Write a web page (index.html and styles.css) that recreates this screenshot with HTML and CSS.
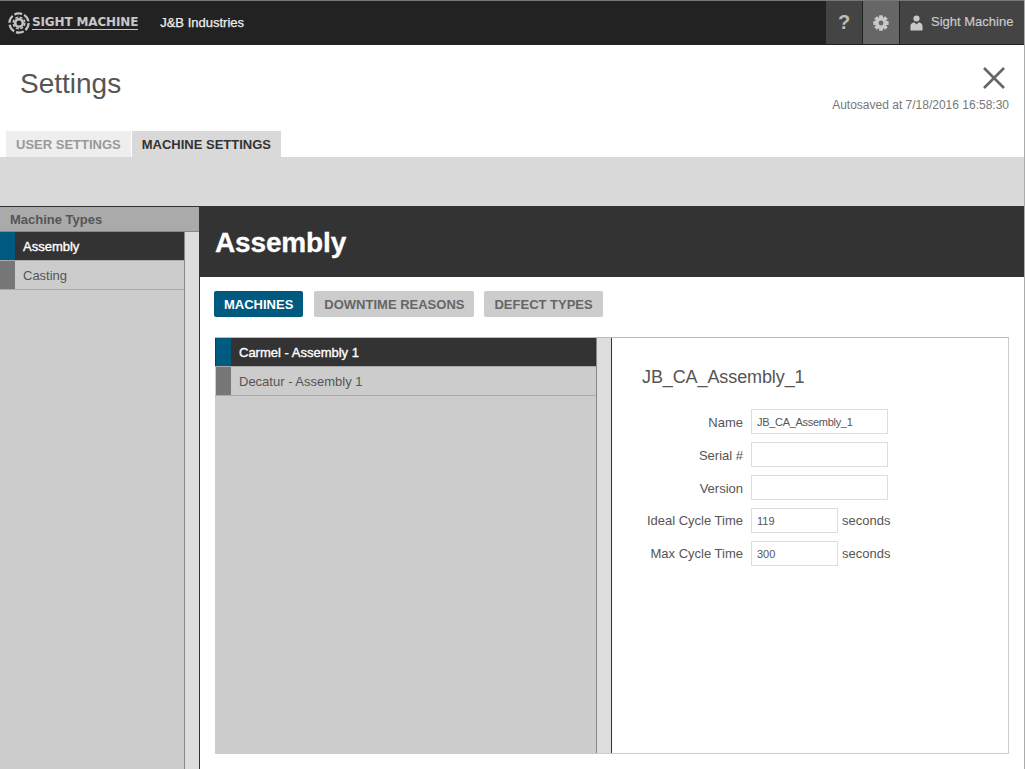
FILE: index.html
```html
<!DOCTYPE html>
<html lang="en">
  <head>
    <meta charset="UTF-8" />
    <title>Settings</title>
    <link rel="stylesheet" href="styles.css">
  </head>
  <body>
    <div class="topbar">
      <div class="brand">
        <svg class="brand-icon" width="24" height="24" viewBox="0 0 24 24">
          <g fill="none" stroke="#c4c4c4">
            <circle cx="12" cy="12" r="9.6" stroke-width="2.2" stroke-dasharray="8 2.05" />
            <circle cx="12" cy="12" r="3.8" stroke-width="2.6" />
            <circle cx="12" cy="12" r="5.8" stroke-width="1.6" stroke-dasharray="3 1.55" />
          </g>
        </svg>
        <span class="brand-name">SIGHT MACHINE</span>
      </div>
      <div class="company">J&amp;B Industries</div>
      <div class="top-actions">
        <div class="top-btn help">?</div>
        <div class="top-btn gear">
          <svg width="16" height="16" viewBox="0 0 18 18">
            <g fill="#c8c8c8">
              <rect x="6.8" y="0.4" width="4.4" height="17.2" rx="0.6" />
              <rect x="6.8" y="0.4" width="4.4" height="17.2" rx="0.6" transform="rotate(45 9 9)" />
              <rect x="6.8" y="0.4" width="4.4" height="17.2" rx="0.6" transform="rotate(90 9 9)" />
              <rect x="6.8" y="0.4" width="4.4" height="17.2" rx="0.6" transform="rotate(135 9 9)" />
              <circle cx="9" cy="9" r="6.4" />
            </g>
            <circle cx="9" cy="9" r="2.7" fill="#666" />
          </svg>
        </div>
        <div class="top-btn user">
          <svg width="13" height="16" viewBox="0 0 14 17">
            <circle cx="7" cy="3.6" r="3.3" fill="#c8c8c8" />
            <path d="M0.5 16.5V11.5C0.5 9.3 2.5 8 4.6 7.6L7 10L9.4 7.6C11.5 8 13.5 9.3 13.5 11.5V16.5Z" fill="#c8c8c8" />
          </svg>
          <span>Sight Machine</span>
        </div>
      </div>
    </div>

    <div class="page-head">
      <div class="title-row">
        <h1>Settings</h1>
        <div class="save-box">
          <svg class="close-icon" width="24" height="24" viewBox="0 0 24 24">
            <path d="M2 2L22 22M22 2L2 22" stroke="#666" stroke-width="2.6" fill="none" />
          </svg>
          <div class="autosaved">Autosaved at 7/18/2016 16:58:30</div>
        </div>
      </div>
      <div class="tabs">
        <div class="tab">USER SETTINGS</div>
        <div class="tab active">MACHINE SETTINGS</div>
      </div>
    </div>

    <div class="band"></div>

    <div class="workspace">
      <div class="sidebar">
        <div class="sidebar-title">Machine Types</div>
        <div class="scroll-wrap">
          <div class="item-list">
            <div class="item selected"><i></i>Assembly</div>
            <div class="item"><i></i>Casting</div>
          </div>
          <div class="scrollbar"></div>
        </div>
      </div>

      <div class="main">
        <div class="main-title">Assembly</div>
        <div class="main-body">
          <div class="pills">
            <div class="pill active">MACHINES</div>
            <div class="pill">DOWNTIME REASONS</div>
            <div class="pill">DEFECT TYPES</div>
          </div>
          <div class="panel">
            <div class="item-list">
              <div class="item selected"><i></i>Carmel - Assembly 1</div>
              <div class="item"><i></i>Decatur - Assembly 1</div>
            </div>
            <div class="scrollbar"></div>
            <div class="detail">
              <h2>JB_CA_Assembly_1</h2>
              <div class="field"><label>Name</label><input type="text" value="JB_CA_Assembly_1" /></div>
              <div class="field"><label>Serial #</label><input type="text" /></div>
              <div class="field"><label>Version</label><input type="text" /></div>
              <div class="field timed"><label>Ideal Cycle Time</label><input class="short" type="text" value="119" /><span>seconds</span></div>
              <div class="field timed"><label>Max Cycle Time</label><input class="short" type="text" value="300" /><span>seconds</span></div>
            </div>
          </div>
        </div>
      </div>
    </div>
  </body>
</html>
```

FILE: styles.css
```css
* {
  box-sizing: border-box;
}

html,
body {
  margin: 0;
  height: 769px;
  overflow: hidden;
}

body {
  display: flex;
  flex-direction: column;
  background: #fff;
  color: #555;
  font-family: "Liberation Sans", Arial, sans-serif;
  font-size: 14px;
  border-right: 1px solid #aaa;
}

/* top bar */
.topbar {
  display: flex;
  align-items: center;
  height: 45px;
  flex: none;
  background: #222;
  border-top: 1px solid #777;
  margin-right: -1px;
}

.brand {
  display: flex;
  align-items: center;
  margin-left: 7px;
}

.brand-name {
  margin-left: 1px;
  color: #c8c8c8;
  font-family: "DejaVu Sans", sans-serif;
  font-size: 12px;
  font-weight: bold;
  letter-spacing: -0.15px;
  line-height: 13px;
  border-bottom: 1px solid #c8c8c8;
}

.company {
  margin-left: 22px;
  margin-bottom: 2px;
  color: #eee;
  font-size: 13px;
  -webkit-text-stroke: 0.25px #eee;
}

.top-actions {
  display: flex;
  height: 100%;
  margin-left: auto;
}

.top-btn {
  display: flex;
  align-items: center;
  justify-content: center;
  height: 43px;
  margin-left: 1px;
  background: #444;
  color: #ccc;
}

.help {
  width: 36px;
  font-size: 20px;
  font-weight: bold;
  color: #bbb;
}

.gear {
  width: 36px;
  background: #666;
}

.user {
  width: 125px;
  justify-content: flex-start;
  gap: 8px;
  padding-left: 10px;
  font-size: 13px;
}

.user span {
  margin-bottom: 2px;
  -webkit-text-stroke: 0.15px #ccc;
}

/* white heading area */
.page-head {
  flex: none;
  height: 112px;
  display: flex;
  flex-direction: column;
  justify-content: space-between;
}

.title-row {
  display: flex;
  justify-content: space-between;
  padding: 23px 15px 0 20px;
}

h1 {
  margin: 0;
  font-size: 28px;
  font-weight: normal;
  line-height: 32px;
  color: #555;
}

.save-box {
  display: flex;
  flex-direction: column;
  align-items: flex-end;
}

.close-icon {
  margin: -2px 3px 0 0;
}

.autosaved {
  margin-top: 8px;
  font-size: 12px;
  color: #777;
}

.tabs {
  display: flex;
  gap: 1px;
  padding-left: 6px;
}

.tab {
  height: 26px;
  padding: 0 10px;
  background: #eee;
  color: #999;
  font-size: 13px;
  font-weight: bold;
  line-height: 27px;
}

.tab.active {
  background: #d9d9d9;
  color: #333;
}

.band {
  flex: none;
  height: 49px;
  background: #d9d9d9;
}

/* lower area */
.workspace {
  flex: 1;
  display: flex;
  min-height: 0;
  border-top: 1px solid #333;
}

.sidebar {
  flex: none;
  width: 200px;
  display: flex;
  flex-direction: column;
  border-right: 1px solid #333;
}

.sidebar-title {
  flex: none;
  height: 25px;
  padding-left: 10px;
  background: #aaa;
  border-bottom: 1px solid #888;
  color: #555;
  font-size: 13px;
  font-weight: bold;
  line-height: 26px;
}

.scroll-wrap {
  flex: 1;
  display: flex;
  min-height: 0;
}

.item-list {
  flex: 1;
  min-width: 0;
  background: #ccc;
}

.scrollbar {
  flex: none;
  width: 15px;
  background: #ddd;
  border-left: 1px solid #888;
}

.item {
  display: flex;
  align-items: center;
  height: 29px;
  border-bottom: 1px solid #aaa;
  color: #555;
  font-size: 13px;
}

.item i {
  width: 15px;
  height: 100%;
  margin-right: 8px;
  background: #777;
}

.item.selected {
  background: #333;
  color: #fff;
  -webkit-text-stroke: 0.35px #fff;
}

.item.selected i {
  background: #005a80;
}

.main {
  flex: 1;
  min-width: 0;
  display: flex;
  flex-direction: column;
}

.main-title {
  flex: none;
  height: 70px;
  padding-left: 15px;
  background: #333;
  color: #fff;
  font-size: 28px;
  font-weight: bold;
  line-height: 71px;
  letter-spacing: -0.15px;
  -webkit-text-stroke: 0.3px #fff;
}

.main-body {
  flex: 1;
  min-height: 0;
  display: flex;
  flex-direction: column;
  padding: 14px 15px 15px 14px;
}

.pills {
  display: flex;
  flex: none;
  gap: 11px;
}

.pill {
  height: 26px;
  padding: 0 10px;
  border-radius: 2px;
  background: #ccc;
  color: #666;
  font-size: 13px;
  font-weight: bold;
  line-height: 27px;
}

.pill + .pill + .pill {
  margin-left: -1px;
}

.pill.active {
  background: #005a80;
  color: #fff;
}

.panel {
  flex: 1;
  min-height: 0;
  display: flex;
  margin: 20px 0 0 1px;
  border-top: 1px solid #bbb;
  border-right: 1px solid #ccc;
  border-bottom: 1px solid #ccc;
}

.panel .item-list {
  flex: none;
  width: 381px;
  border-left: 1px solid #ccc;
}

.panel .item {
  margin-left: -1px;
  padding-left: 1px;
}

.panel .scrollbar {
  width: 16px;
  border-right: 1px solid #333;
}

.detail {
  flex: 1;
  padding: 28px 0 0 30px;
}

h2 {
  margin: 0 0 21px;
  font-size: 18px;
  font-weight: normal;
  line-height: 22px;
  letter-spacing: -0.1px;
  color: #555;
}

.field {
  display: flex;
  align-items: center;
  height: 25px;
  margin-bottom: 8px;
  color: #555;
  font-size: 13px;
}

.field label {
  width: 110px;
  margin-left: -9px;
  margin-right: 8px;
  padding-top: 1px;
  text-align: right;
}

.field.timed label {
  padding-top: 0;
}

.field input {
  width: 137px;
  height: 25px;
  padding: 0 5px;
  border: 1px solid #ddd;
  border-radius: 0;
  outline: none;
  color: #555;
  font-family: "Liberation Sans", Arial, sans-serif;
  font-size: 11px;
  letter-spacing: -0.3px;
}

.field input.short {
  width: 87px;
  letter-spacing: 0;
}

.field span {
  margin-left: 4px;
  margin-bottom: 1px;
}
```
